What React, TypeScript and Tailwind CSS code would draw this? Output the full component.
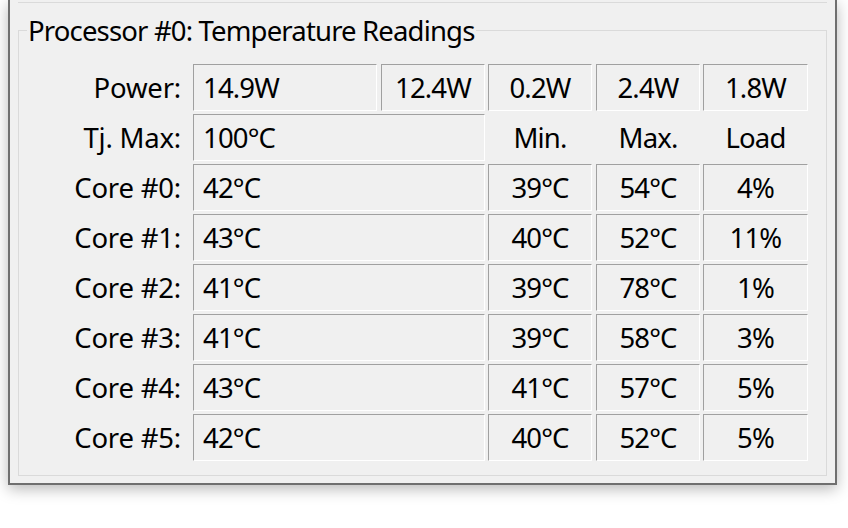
import React from 'react';

type Core = { name: string; temp: string; min: string; max: string; load: string };

const power = ['14.9W', '12.4W', '0.2W', '2.4W', '1.8W'];

const cores: Core[] = [
  { name: 'Core #0:', temp: '42°C', min: '39°C', max: '54°C', load: '4%' },
  { name: 'Core #1:', temp: '43°C', min: '40°C', max: '52°C', load: '11%' },
  { name: 'Core #2:', temp: '41°C', min: '39°C', max: '78°C', load: '1%' },
  { name: 'Core #3:', temp: '41°C', min: '39°C', max: '58°C', load: '3%' },
  { name: 'Core #4:', temp: '43°C', min: '41°C', max: '57°C', load: '5%' },
  { name: 'Core #5:', temp: '42°C', min: '40°C', max: '52°C', load: '5%' },
];

// sunken static box, like a Win32 SS_SUNKEN label
function Cell({
  children,
  className = '',
  left = false,
}: {
  children: React.ReactNode;
  className?: string;
  left?: boolean;
}) {
  return (
    <div
      className={`h-[47px] pt-[1px] flex items-center border border-t-[#a0a0a0] border-l-[#a0a0a0] border-b-white border-r-white ${
        left ? 'justify-start pl-[9px]' : 'justify-center'
      } ${className}`}
    >
      {children}
    </div>
  );
}

function Label({ children }: { children: React.ReactNode }) {
  return (
    <div className="w-[162px] mr-[12px] pt-[1px] text-right tracking-[-0.2px] shrink-0">{children}</div>
  );
}

export default function App() {
  return (
    <div
      className="w-[848px] h-[528px] bg-white overflow-hidden text-black"
      style={{ fontFamily: '"Noto Sans", "Open Sans", sans-serif' }}
    >
      <div className="ml-[8px] w-[829px] h-[485px] bg-[#f0f0f0] border-l-2 border-r-2 border-b-2 border-[#6f6f6f] shadow-[0_4px_14px_rgba(0,0,0,0.28)] px-[8px] flex flex-col">
        {/* bottom of the group box above */}
        <div className="h-[3px] border-b border-[#dadada] shrink-0" />

        <div className="relative mt-[27px] h-[446px] border border-[#dadada] text-[27.5px] tracking-[-0.84px] leading-none">
          <div className="absolute left-[8px] -top-[14px] px-[1px] bg-[#f0f0f0]">
            Processor #0: Temperature Readings
          </div>

          <div className="pt-[33px] flex flex-col gap-[3px]">
            <div className="flex items-center">
              <Label>Power:</Label>
              <Cell left className="w-[184px]">{power[0]}</Cell>
              <Cell className="w-[104px] ml-[4px]">{power[1]}</Cell>
              <Cell className="w-[104px] ml-[3px]">{power[2]}</Cell>
              <Cell className="w-[104px] ml-[4px]">{power[3]}</Cell>
              <Cell className="w-[105px] ml-[3px]">{power[4]}</Cell>
            </div>

            <div className="flex items-center">
              <Label>Tj. Max:</Label>
              <Cell left className="w-[292px]">100°C</Cell>
              <div className="w-[104px] ml-[3px] pt-[1px] text-center">Min.</div>
              <div className="w-[104px] ml-[4px] pt-[1px] text-center">Max.</div>
              <div className="w-[105px] ml-[3px] pt-[1px] text-center">Load</div>
            </div>

            {cores.map((c) => (
              <div key={c.name} className="flex items-center">
                <Label>{c.name}</Label>
                <Cell left className="w-[292px]">{c.temp}</Cell>
                <Cell className="w-[104px] ml-[3px]">{c.min}</Cell>
                <Cell className="w-[104px] ml-[4px]">{c.max}</Cell>
                <Cell className="w-[105px] ml-[3px]">{c.load}</Cell>
              </div>
            ))}
          </div>
        </div>
      </div>
    </div>
  );
}
